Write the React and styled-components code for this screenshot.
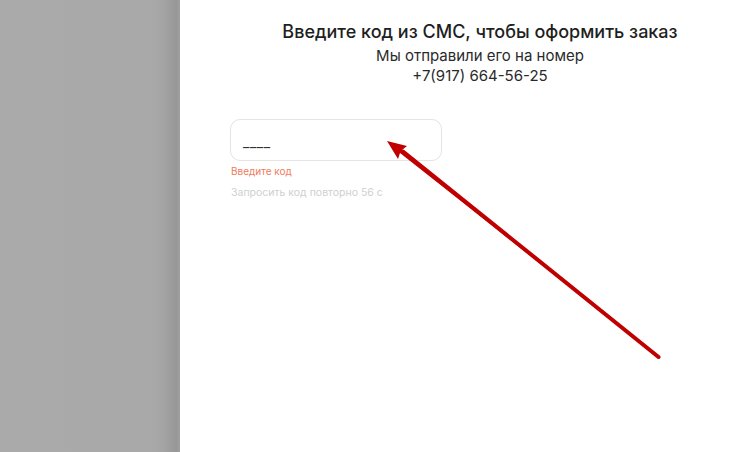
import React from "react";
import styled, { createGlobalStyle } from "styled-components";

const GlobalStyle = createGlobalStyle`
  html, body {
    margin: 0;
    padding: 0;
    width: 752px;
    height: 452px;
    overflow: hidden;
    background: #ffffff;
  }
  * { box-sizing: border-box; }
`;

const Screen = styled.div`
  width: 752px;
  height: 452px;
  display: flex;
  overflow: hidden;
  font-family: Inter, "Noto Sans", sans-serif;
`;

const Backdrop = styled.div`
  width: 180px;
  flex-shrink: 0;
  background: linear-gradient(
    90deg,
    #aaaaaa 0%,
    #a9a9a9 84%,
    #a4a4a4 91%,
    #979797 98%,
    #a0a0a0 100%
  );
`;

const Panel = styled.div`
  width: 600px;
  flex-shrink: 0;
  position: relative;
  background: #ffffff;
  display: flex;
  flex-direction: column;
  padding: 20px 0 0 50px;
`;

const Header = styled.div`
  width: 500px;
  display: flex;
  flex-direction: column;
  align-items: center;
  color: #1f1f1f;
`;

const Title = styled.div`
  font-size: 18px;
  font-weight: 500;
  line-height: 24px;
  margin-bottom: 2px;
  white-space: nowrap;
`;

const Subtitle = styled.div`
  font-size: 15px;
  line-height: 20px;
  color: #2a2a2a;
  white-space: nowrap;
`;

const CodeBox = styled.div`
  margin-top: 33px;
  width: 212px;
  height: 42px;
  border: 1px solid #e4e4e4;
  border-radius: 10px;
  display: flex;
  align-items: center;
  padding: 0 0 0 12px;
`;

const Placeholder = styled.div`
  font-size: 14px;
  color: #333333;
  letter-spacing: 0.5px;
  transform: translateY(1px);
`;

const Hint = styled.div`
  font-size: ${(p) => (p.$error ? 10 : 10.5)}px;
  line-height: 14px;
  color: ${(p) => (p.$error ? "#ef7b5c" : "#cfcfcf")};
  margin-top: ${(p) => p.$gap}px;
  padding-left: 1px;
  white-space: nowrap;
`;

const ArrowLayer = styled.svg`
  position: absolute;
  left: -180px;
  top: 0;
  width: 752px;
  height: 452px;
  pointer-events: none;
`;

export default function App() {
  return (
    <>
      <GlobalStyle />
      <Screen>
        <Backdrop />
        <Panel>
          <Header>
            <Title>Введите код из СМС, чтобы оформить заказ</Title>
            <Subtitle>Мы отправили его на номер</Subtitle>
            <Subtitle>+7(917) 664-56-25</Subtitle>
          </Header>
          <CodeBox>
            <Placeholder>____</Placeholder>
          </CodeBox>
          <Hint $error $gap={3}>
            Введите код
          </Hint>
          <Hint $gap={8}>Запросить код повторно 56 с</Hint>
          <ArrowLayer viewBox="0 0 752 452">
            <polygon
              points="658,356.5 400,153 398,159 387,141 407,146 402,150 659,357.5"
              fill="#c00000"
            />
            <path
              d="M658.5 357 L403 151.5"
              stroke="#c00000"
              strokeWidth="4"
              strokeLinecap="round"
              fill="none"
            />
          </ArrowLayer>
        </Panel>
      </Screen>
    </>
  );
}
